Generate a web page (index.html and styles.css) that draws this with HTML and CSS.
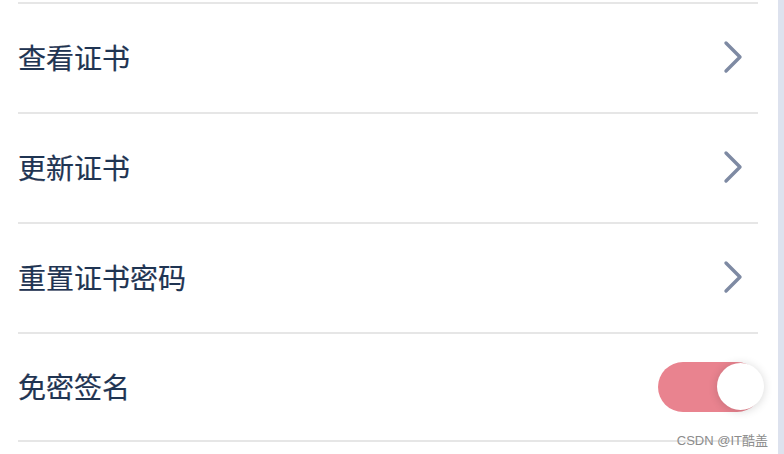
FILE: index.html
```html
<!DOCTYPE html>
<html lang="zh-CN">
<head>
<meta charset="utf-8">
<link rel="stylesheet" href="styles.css">
</head>
<body>
<div class="page">
  <main class="main">
    <ul class="list">
      <li class="row">
        <span class="label">查看证书</span>
        <svg class="chev" width="20" height="34" viewBox="0 0 20 34"><path d="M3 3 L17 17 L3 31" fill="none" stroke="#7e8aa3" stroke-width="3.4" stroke-linecap="round" stroke-linejoin="round"/></svg>
      </li>
      <li class="row">
        <span class="label">更新证书</span>
        <svg class="chev" width="20" height="34" viewBox="0 0 20 34"><path d="M3 3 L17 17 L3 31" fill="none" stroke="#7e8aa3" stroke-width="3.4" stroke-linecap="round" stroke-linejoin="round"/></svg>
      </li>
      <li class="row">
        <span class="label">重置证书密码</span>
        <svg class="chev" width="20" height="34" viewBox="0 0 20 34"><path d="M3 3 L17 17 L3 31" fill="none" stroke="#7e8aa3" stroke-width="3.4" stroke-linecap="round" stroke-linejoin="round"/></svg>
      </li>
      <li class="row row-last">
        <span class="label">免密签名</span>
        <span class="toggle"><span class="knob"></span></span>
      </li>
    </ul>
    <div class="watermark">CSDN @IT酷盖</div>
  </main>
  <aside class="strip"></aside>
</div>
</body>
</html>
```
FILE: styles.css
```css
html, body {
  margin: 0;
  padding: 0;
  background: #ffffff;
}
body {
  font-family: "Noto Sans CJK SC", "Noto Sans", sans-serif;
}
.page {
  display: flex;
  width: 784px;
  height: 454px;
  overflow: hidden;
}
.main {
  flex: 1;
  position: relative;
  background: #ffffff;
  padding: 2px 20px 0 18px;
}
.strip {
  width: 6px;
  background: #dde2ee;
}
.list {
  list-style: none;
  margin: 0;
  padding: 0;
}
.row {
  display: flex;
  align-items: center;
  justify-content: space-between;
  height: 108px;
  border-top: 2px solid #e6e6e6;
}
.row-last {
  height: 106px;
  border-bottom: 2px solid #e6e6e6;
}
.label {
  font-size: 28px;
  color: #1f3452;
  line-height: 1;
  margin-top: -3px;
  -webkit-text-stroke: 0.2px #1f3452;
}
.chev {
  display: block;
  margin-right: 15px;
  margin-top: -2px;
}
.toggle {
  position: relative;
  display: block;
  width: 104px;
  height: 50px;
  border-radius: 25px;
  background: #e9838f;
  margin-right: -4px;
}
.knob {
  position: absolute;
  top: 1px;
  right: -2px;
  width: 47px;
  height: 47px;
  border-radius: 50%;
  background: #ffffff;
  box-shadow: 0 1px 10px rgba(0, 0, 0, 0.16);
}
.watermark {
  position: absolute;
  right: 10px;
  bottom: 7px;
  font-family: "Liberation Sans", "Noto Sans CJK SC", sans-serif;
  font-size: 13px;
  color: #8c8c8c;
  line-height: 1;
}
```
